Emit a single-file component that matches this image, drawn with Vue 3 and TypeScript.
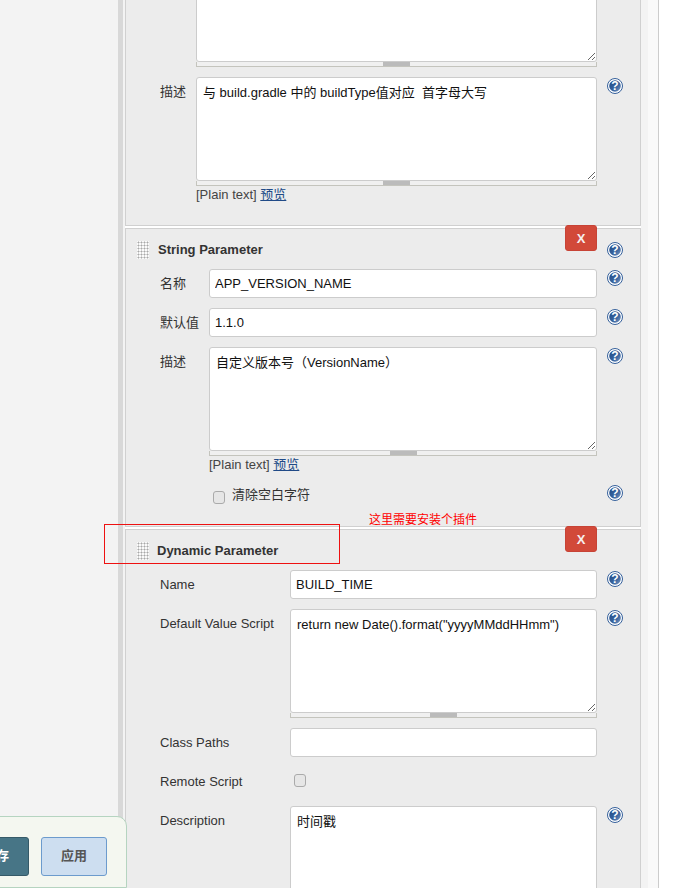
<script setup lang="ts">
interface Field {
  label: string;
  kind: 'input' | 'area' | 'check';
  value?: string;
  cut?: boolean; // top of the textarea is scrolled out of view
  markup?: boolean;
  inline?: boolean; // label sits right of the checkbox
  help?: boolean;
}

interface Section {
  title?: string;
  cols: string;
  help?: boolean;
  fields: Field[];
}

const sections: Section[] = [
  {
    cols: 'cols-plain',
    fields: [
      { label: '', kind: 'area', value: '', cut: true },
      {
        label: '描述',
        kind: 'area',
        value: '与 build.gradle 中的 buildType值对应  首字母大写',
        markup: true,
        help: true,
      },
    ],
  },
  {
    title: 'String Parameter',
    cols: 'cols-string',
    help: true,
    fields: [
      { label: '名称', kind: 'input', value: 'APP_VERSION_NAME', help: true },
      { label: '默认值', kind: 'input', value: '1.1.0', help: true },
      { label: '描述', kind: 'area', value: '自定义版本号（VersionName）', markup: true, help: true },
      { label: '清除空白字符', kind: 'check', inline: true, help: true },
    ],
  },
  {
    title: 'Dynamic Parameter',
    cols: 'cols-dynamic',
    fields: [
      { label: 'Name', kind: 'input', value: 'BUILD_TIME', help: true },
      {
        label: 'Default Value Script',
        kind: 'area',
        value: 'return new Date().format("yyyyMMddHHmm")',
        help: true,
      },
      { label: 'Class Paths', kind: 'input', value: '' },
      { label: 'Remote Script', kind: 'check' },
      { label: 'Description', kind: 'area', value: '时间戳', help: true },
    ],
  },
];
</script>

<template>
  <div class="page">
    <svg class="defs" width="0" height="0">
      <defs>
        <linearGradient id="help-fill" x1="0" y1="0" x2="1" y2="1">
          <stop offset="0" stop-color="#1f4a86" />
          <stop offset="0.6" stop-color="#3a659f" />
          <stop offset="1" stop-color="#7f9dc6" />
        </linearGradient>
        <symbol id="help-icon" viewBox="0 0 16 16">
          <circle cx="8" cy="8" r="7.5" fill="#fff" stroke="#35609b" stroke-width="1" />
          <circle cx="8" cy="8" r="5.8" fill="url(#help-fill)" />
          <text x="8" y="12.2" text-anchor="middle" class="help-mark">?</text>
        </symbol>
      </defs>
    </svg>

    <aside class="sidebar"></aside>
    <div class="stripe"></div>

    <main class="main">
      <section
        v-for="(section, s) in sections"
        :key="s"
        class="block"
        :class="[section.cols, { titled: section.title }]"
      >
        <header v-if="section.title" class="block-head">
          <span class="handle"></span>
          <h3>{{ section.title }}</h3>
          <button class="delete">X</button>
          <svg v-if="section.help" class="help head-help"><use href="#help-icon" /></svg>
        </header>

        <div
          v-for="(field, f) in section.fields"
          :key="f"
          class="row"
          :class="[`row-${field.kind}`, { 'row-inline': field.inline }]"
        >
          <label class="label">{{ field.inline ? '' : field.label }}</label>

          <div class="control">
            <input v-if="field.kind === 'input'" class="text" type="text" :value="field.value" />
            <template v-else-if="field.kind === 'area'">
              <textarea class="area" :class="{ cut: field.cut }" :value="field.value"></textarea>
              <div class="grip"><span></span></div>
              <p v-if="field.markup" class="markup">[Plain text] <a href="#">预览</a></p>
            </template>
            <label v-else class="check-line">
              <input class="box" type="checkbox" />
              <span v-if="field.inline">{{ field.label }}</span>
            </label>
          </div>

          <svg v-if="field.help" class="help"><use href="#help-icon" /></svg>
        </div>
      </section>
    </main>

    <div class="edge"></div>

    <!-- annotations drawn over the screenshot -->
    <p class="note">这里需要安装个插件</p>
    <div class="red-box"></div>

    <footer class="bottom-bar">
      <button class="save">保存</button>
      <button class="apply">应用</button>
    </footer>
  </div>
</template>

<style>
html,
body {
  margin: 0;
  background: #fff;
}
</style>

<style scoped>
.page {
  position: relative;
  display: flex;
  width: 685px;
  height: 888px;
  overflow: hidden;
  font-family: "Liberation Sans", "Noto Sans CJK SC", sans-serif;
  font-size: 13px;
  color: #333;
  background: #fff;
}
.defs {
  position: absolute;
}
.sidebar {
  width: 118px;
  flex: none;
  background: #f3f3f3;
}
.stripe {
  width: 5px;
  flex: none;
  margin-right: 2px;
  background: #d8d8d8;
  box-shadow: 2px 0 0 #f3f3f3;
}
.main {
  width: 516px;
  flex: none;
  margin-top: -42px;
}
.edge {
  box-sizing: border-box;
  width: 18px;
  flex: none;
  border-right: 1px solid #ccc;
  background: linear-gradient(90deg, #f3f3f3 7px, #f9f9f9 7px);
}
.block {
  box-sizing: border-box;
  position: relative;
  margin-bottom: 2px;
  padding-left: 34px;
  border: 1px solid #d0d0d0;
  background: #ececec;
}
.cols-plain {
  height: 268px;
  border-top: 0;
  --label: 36px;
  --control: 401px;
}
.cols-string {
  height: 299px;
  padding-top: 40px;
  --label: 49px;
  --control: 388px;
}
.cols-dynamic {
  height: 400px;
  padding-top: 40px;
  --label: 130px;
  --control: 307px;
}
.block-head {
  position: absolute;
  top: 0;
  left: 0;
  right: 0;
}
.handle {
  position: absolute;
  left: 11px;
  top: 12px;
  width: 12px;
  height: 18px;
  background-color: #fbfbfb;
  background-image: radial-gradient(#a8a8a8 0.9px, transparent 1.1px);
  background-size: 3px 3px;
}
.block-head h3 {
  position: absolute;
  left: 32px;
  top: 13px;
  margin: 0;
  font-size: 13px;
  line-height: 16px;
  font-weight: bold;
}
.cols-dynamic .block-head h3 {
  left: 31px;
}
.delete {
  position: absolute;
  top: -4px;
  left: 439px;
  width: 32px;
  height: 26px;
  padding: 0;
  border: 1px solid #c74336;
  border-radius: 3px;
  background: #d24939;
  color: #f6eeee;
  font: bold 13px "Liberation Sans", sans-serif;
}
.row {
  display: grid;
  grid-template-columns: var(--label) var(--control) 1fr;
  align-items: start;
  margin-bottom: 10px;
}
.row-check {
  min-height: 29px;
}
.label {
  padding-top: 7px;
  line-height: 16px;
}
.text {
  box-sizing: border-box;
  display: block;
  width: 100%;
  height: 29px;
  padding: 0 5px;
  border: 1px solid #ccc;
  border-radius: 3px;
  background: #fff;
  font: 13px "Liberation Sans", "Noto Sans CJK SC", sans-serif;
  color: #111;
  outline: none;
}
.area {
  box-sizing: border-box;
  display: block;
  width: 100%;
  height: 104px;
  padding: 7px 6px 5px;
  border: 1px solid #ccc;
  border-radius: 3px;
  background: #fff;
  font: 13px/16px "Liberation Sans", "Noto Sans CJK SC", sans-serif;
  color: #111;
  outline: none;
  resize: vertical;
}
.grip {
  box-sizing: border-box;
  display: flex;
  justify-content: center;
  height: 5px;
  border: 1px solid #c4c4bd;
  border-top: 0;
  background: #f0f0f0;
}
.grip span {
  width: 27px;
  background: #bbb;
}
.markup {
  margin: 1px 0 2px;
  line-height: 16px;
  color: #444;
}
.markup a {
  color: #204a87;
}
.help {
  display: block;
  width: 16px;
  height: 16px;
  margin: 1px 0 0 10px;
}
.row-inline .help {
  margin-top: 0;
}
.head-help {
  position: absolute;
  left: 471px;
  top: 12px;
}
.help-mark {
  font: bold 12px "Liberation Sans", sans-serif;
  fill: #fff;
}
.check-line {
  display: flex;
  gap: 7px;
  padding: 7px 0 0 4px;
  line-height: 16px;
}
.row-inline .check-line {
  padding-top: 2px;
}
.row-inline .box {
  margin-top: 4px;
}
.box {
  appearance: none;
  box-sizing: border-box;
  display: block;
  width: 12px;
  height: 13px;
  margin: 0;
  border: 1px solid #aaa;
  border-radius: 3px;
  background: #e6e6e6;
}
.note {
  position: absolute;
  left: 369px;
  top: 512px;
  margin: 0;
  font-size: 12px;
  line-height: 16px;
  color: #f00;
}
.red-box {
  box-sizing: border-box;
  position: absolute;
  left: 104px;
  top: 524px;
  width: 236px;
  height: 40px;
  border: 1px solid #e11;
}
.bottom-bar {
  box-sizing: border-box;
  position: absolute;
  left: -50px;
  top: 816px;
  display: flex;
  gap: 12px;
  width: 177px;
  height: 72px;
  padding: 20px 0 0 12px;
  border: 1px solid #b5d4c0;
  border-radius: 0 10px 0 0;
  background: #f4f7f0;
}
.bottom-bar button {
  width: 66px;
  height: 39px;
  padding: 0 0 5px;
  border-radius: 3px;
  font: bold 13px "Liberation Sans", "Noto Sans CJK SC", sans-serif;
}
.save {
  border: 1px solid #355a68;
  background: #477586;
  color: #fff;
}
.apply {
  border: 1px solid #6c9bcd;
  background: #cddef0;
  color: #555;
}
</style>
